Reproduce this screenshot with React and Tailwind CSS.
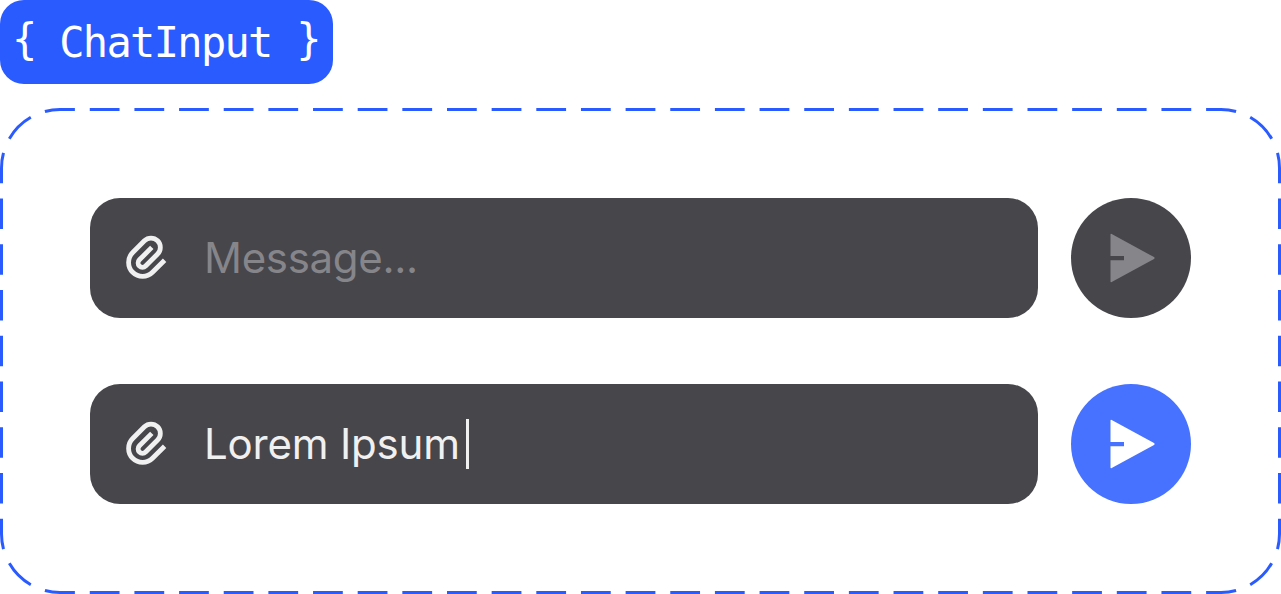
import clsx from "clsx";

// Each side is dashed on its own so that every dash is centred on a corner join.
const FRAME_SEGMENTS = [
    { d: "M60 1.5H1221", length: 78 },
    { d: "M1221 1.5A58.5 58.5 0 0 1 1279.5 60", length: 6 },
    { d: "M1279.5 60V426", length: 24 },
    { d: "M1279.5 426A58.5 58.5 0 0 1 1221 484.5", length: 6 },
    { d: "M1221 484.5H60", length: 78 },
    { d: "M60 484.5A58.5 58.5 0 0 1 1.5 426", length: 6 },
    { d: "M1.5 426V60", length: 24 },
    { d: "M1.5 60A58.5 58.5 0 0 1 60 1.5", length: 6 },
];

function DashedFrame() {
    return (
        <svg className="absolute inset-0 size-full" viewBox="0 0 1281 486" fill="none" stroke="#2A5BFF" strokeWidth="3">
            {FRAME_SEGMENTS.map(({ d, length }) => (
                <path key={d} d={d} pathLength={length} strokeDasharray="2 1" strokeDashoffset="1" />
            ))}
        </svg>
    );
}

function ClipIcon() {
    return (
        <svg className="w-[42px] h-12 shrink-0" viewBox="0 0 42 48" fill="none" stroke="#F0F0F0" strokeWidth="4.8">
            <path d="M39.6 26.2L27.5 38.3A14 14 0 0 1 7.7 18.5L19.4 6.8A9.3 9.3 0 0 1 32.6 20L20.6 32A4.35 4.35 0 0 1 14.4 25.8L26.8 13.4" />
        </svg>
    );
}

function SendIcon() {
    return (
        <svg className="w-[46px] h-[50px] ml-[1px]" viewBox="0 0 46 50" fill="currentColor">
            <path d="M1.5 1.6Q1.5 .4 2.7 1L45 24.1Q46.2 25 45 25.9L2.7 49Q1.5 49.6 1.5 48.4V27.2H15V23H1.5Z" />
        </svg>
    );
}

function ChatInput({ value }) {
    return (
        <div className="flex gap-[33px]">
            <div className="flex-1 h-[120px] flex items-center gap-[37px] pl-[35px] rounded-[30px] bg-[#47464B]">
                <ClipIcon />
                <div className="flex items-center text-[42px] leading-[50px] whitespace-nowrap font-['Inter',sans-serif]">
                    <span className={value ? "text-[#F0F0F0] tracking-[-0.2px]" : "text-[#86858A] tracking-[-0.3px]"}>
                        {value || "Message..."}
                    </span>
                    {value && <span className="w-[3px] h-[50px] ml-1.5 bg-[#F0F0F0]" />}
                </div>
            </div>
            <button
                className={clsx(
                    "size-[120px] shrink-0 rounded-full flex items-center justify-center",
                    value ? "bg-[#4772FF] text-white" : "bg-[#47464B] text-[#86858A]"
                )}
                aria-label="Send"
            >
                <SendIcon />
            </button>
        </div>
    );
}

export default function App() {
    return (
        <div className="w-[1281px] h-[594px] flex flex-col items-start gap-6 bg-white overflow-hidden">
            <div className="w-[333px] h-[84px] pr-px flex items-center justify-center rounded-3xl bg-[#2A5BFF] text-white text-[42px] tracking-[-1.68px] whitespace-pre font-['DejaVu_Sans_Mono',monospace]">
                <span className="pb-1.5">{"{ "}</span>
                <span>ChatInput</span>
                <span className="pb-1.5 ml-px">{" }"}</span>
            </div>
            <div className="relative w-full h-[486px] p-[90px] flex flex-col gap-[66px]">
                <DashedFrame />
                <ChatInput value="" />
                <ChatInput value="Lorem Ipsum" />
            </div>
        </div>
    );
}
